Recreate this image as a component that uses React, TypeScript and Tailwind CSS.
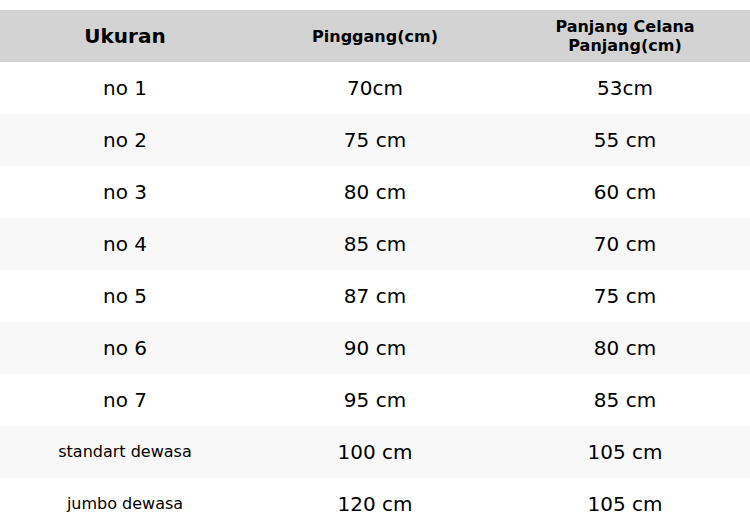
const rows = [
  { size: 'no 1', waist: '70cm', length: '53cm' },
  { size: 'no 2', waist: '75 cm', length: '55 cm' },
  { size: 'no 3', waist: '80 cm', length: '60 cm' },
  { size: 'no 4', waist: '85 cm', length: '70 cm' },
  { size: 'no 5', waist: '87 cm', length: '75 cm' },
  { size: 'no 6', waist: '90 cm', length: '80 cm' },
  { size: 'no 7', waist: '95 cm', length: '85 cm' },
  { size: 'standart dewasa', waist: '100 cm', length: '105 cm', small: true },
  { size: 'jumbo dewasa', waist: '120 cm', length: '105 cm', small: true },
];

export default function App() {
  return (
    <div className="w-[750px] h-[530px] bg-white pt-[10px] font-['DejaVu_Sans',sans-serif] text-black overflow-hidden">
      <table className="w-full table-fixed border-collapse">
        <thead>
          <tr className="bg-[#d3d3d3] h-[52px]">
            <th className="w-1/3 text-[20px] font-bold leading-[24px]">Ukuran</th>
            <th className="w-1/3 text-[16px] font-bold leading-[19px]">Pinggang(cm)</th>
            <th className="w-1/3 text-[16px] font-bold leading-[19px]">
              Panjang Celana
              <br />
              Panjang(cm)
            </th>
          </tr>
        </thead>
        <tbody>
          {rows.map((r, i) => (
            <tr key={r.size} className={`h-[52px] ${i % 2 === 1 ? 'bg-[#f8f8f8]' : 'bg-white'}`}>
              <td className={`text-center ${r.small ? 'text-[16px]' : 'text-[20px]'}`}>{r.size}</td>
              <td className="text-center text-[20px]">{r.waist}</td>
              <td className="text-center text-[20px]">{r.length}</td>
            </tr>
          ))}
        </tbody>
      </table>
    </div>
  );
}
